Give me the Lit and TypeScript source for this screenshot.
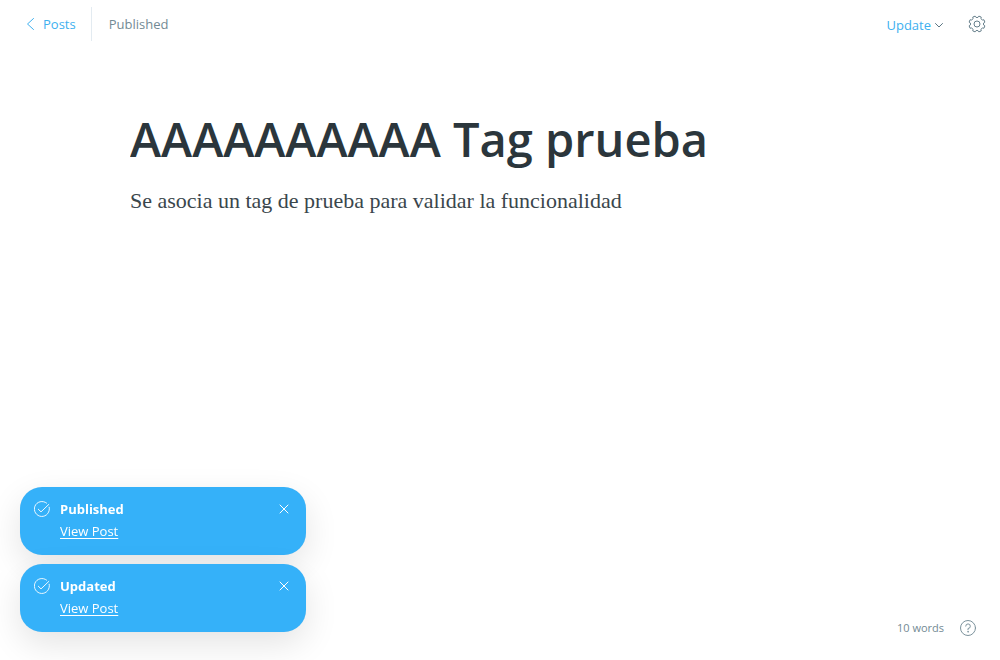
import { LitElement, html, css, svg } from "lit";
import { customElement, property, state } from "lit/decorators.js";

@customElement("toast-notice")
export class ToastNotice extends LitElement {
  @property() heading = "";

  static styles = css`
    :host { display: block; }
    .toast {
      display: flex;
      align-items: flex-start;
      gap: 10px;
      box-sizing: border-box;
      padding: 11px 16px 13px 14px;
      border-radius: 22px;
      background: #35b1f9;
      color: #fff;
      font-size: 13px;
      line-height: 22px;
      box-shadow: 0 0 1px rgba(0, 0, 0, 0.08), 0 12px 34px rgba(0, 0, 0, 0.11);
    }
    .body { flex: 1; }
    .heading { font-weight: 700; }
    .link { color: #fff; text-underline-offset: 2px; display: inline-block; }
    .check { display: block; margin-top: 3px; }
    .close {
      border: 0;
      padding: 0;
      margin-top: 5px;
      background: none;
      color: inherit;
      cursor: pointer;
      display: flex;
    }
  `;

  private dismiss() {
    this.dispatchEvent(new CustomEvent("dismiss", { bubbles: true, composed: true }));
  }

  render() {
    return html`
      <div class="toast" role="status">
        <svg class="check" width="16" height="16" viewBox="0 0 16 16" fill="none" stroke="#fff" stroke-opacity="0.9" stroke-width="1" stroke-linecap="round" stroke-linejoin="round" aria-hidden="true">
          <path d="M15.2 6.2A7.5 7.5 0 1 1 12.6 2.1" />
          <path d="M4.3 8.2L7 10.9L14.8 3.4" />
        </svg>
        <div class="body">
          <div class="heading">${this.heading}</div>
          <a class="link" href="#view">View Post</a>
        </div>
        <button class="close" aria-label="Close" @click=${this.dismiss}>
          <svg width="12" height="12" viewBox="0 0 12 12" fill="none" stroke="currentColor" stroke-width="1" stroke-linecap="round">
            <path d="M2 2L10 10M10 2L2 10" />
          </svg>
        </button>
      </div>
    `;
  }
}

@customElement("app-root")
export class AppRoot extends LitElement {
  @state() private toasts = ["Published", "Updated"];

  static styles = css`
    :host {
      display: flex;
      flex-direction: column;
      min-height: 100vh;
      background: #fff;
      color: #15171a;
      font-family: "Open Sans", "Noto Sans", sans-serif;
      font-size: 13px;
    }
    .bar {
      display: flex;
      align-items: center;
      justify-content: space-between;
      padding: 7px 14px 0 26px;
      line-height: 20px;
    }
    .side { display: flex; align-items: center; }
    .back {
      display: flex;
      align-items: center;
      gap: 7px;
      height: 34px;
      padding-right: 15px;
      border-right: 1px solid #e3ebf1;
      color: #3eb0ef;
      text-decoration: none;
    }
    .status { padding-left: 17px; color: #738a94; }
    button {
      border: 0;
      padding: 0;
      background: none;
      font: inherit;
      cursor: pointer;
      display: flex;
      align-items: center;
    }
    .update { gap: 3px; padding-top: 2px; color: #3eb0ef; }
    .update svg { color: #5b7683; }
    .gear { margin-left: 24px; color: #667f8b; }
    .editor {
      flex: 1;
      box-sizing: border-box;
      width: 100%;
      max-width: 740px;
      margin: 0 auto;
      padding-top: 68px;
    }
    .title {
      display: block;
      width: 100%;
      border: 0;
      padding: 0;
      margin: 0 0 16px;
      outline: none;
      background: none;
      color: #2b363c;
      font: 600 47px/60px "Open Sans", "Noto Sans", sans-serif;
    }
    .text {
      margin: 0;
      outline: none;
      color: #3a464c;
      font: 22px/32px Georgia, "Liberation Serif", serif;
    }
    .toasts {
      position: fixed;
      left: 20px;
      bottom: 28px;
      display: flex;
      flex-direction: column;
      gap: 9px;
      width: 286px;
    }
    .foot {
      display: flex;
      align-items: center;
      justify-content: flex-end;
      gap: 15px;
      padding: 0 23px 23px 0;
      color: #738a94;
      font-size: 11px;
      line-height: 18px;
    }
    .help { display: flex; color: #7d939d; }
  `;

  private gearPath() {
    const c = 9;
    const pt = (r: number, deg: number) => {
      const a = (deg * Math.PI) / 180;
      return `${(c + r * Math.cos(a)).toFixed(2)} ${(c + r * Math.sin(a)).toFixed(2)}`;
    };
    let d = "";
    for (let i = 0; i < 8; i++) {
      const a = i * 45 + 22.5;
      d += `${i ? "L" : "M"}${pt(8.1, a - 9)}L${pt(8.1, a + 9)}Q${pt(6.5, a + 11)} ${pt(6.4, a + 22.5)}Q${pt(6.5, a + 34)} ${pt(8.1, a + 36)}`;
    }
    return d + "Z";
  }

  private dismiss(name: string) {
    this.toasts = this.toasts.filter((t) => t !== name);
  }

  render() {
    return html`
      <header class="bar">
        <div class="side">
          <a class="back" href="#posts">
            <svg width="10" height="14" viewBox="0 0 10 14" fill="none" stroke="currentColor" stroke-width="1" stroke-linecap="round" stroke-linejoin="round" aria-hidden="true">
              <path d="M7.5 1.5L1.5 7L7.5 12.5" />
            </svg>
            Posts
          </a>
          <span class="status">Published</span>
        </div>
        <div class="side">
          <button class="update">
            Update
            <svg width="10" height="8" viewBox="0 0 10 8" fill="none" stroke="currentColor" stroke-width="1" stroke-linecap="round" stroke-linejoin="round" aria-hidden="true">
              <path d="M1.5 2.5L5 6L8.5 2.5" />
            </svg>
          </button>
          <button class="gear" aria-label="Settings">
            <svg width="18" height="18" viewBox="0 0 18 18" fill="none" stroke="currentColor" stroke-width="1" stroke-linejoin="round">
              ${svg`<path d=${this.gearPath()} />`}
              <circle cx="9" cy="9" r="3" />
            </svg>
          </button>
        </div>
      </header>
      <main class="editor">
        <input class="title" aria-label="Post title" spellcheck="false" .value=${"AAAAAAAAAA Tag prueba"} />
        <p class="text" contenteditable="true" spellcheck="false">Se asocia un tag de prueba para validar la funcionalidad</p>
      </main>
      <footer class="foot">
        <span>10 words</span>
        <a class="help" href="#help" aria-label="Help">
          <svg width="18" height="18" viewBox="0 0 18 18" fill="none" stroke="currentColor" stroke-width="1" stroke-linecap="round">
            <circle cx="9" cy="9" r="7.5" />
            <path d="M6.7 7.1A2.3 2.3 0 1 1 9 9.5V10.8" />
            <circle cx="9" cy="12.8" r="0.3" />
          </svg>
        </a>
      </footer>
      <aside class="toasts">
        ${this.toasts.map(
          (t) => html`<toast-notice .heading=${t} @dismiss=${() => this.dismiss(t)}></toast-notice>`
        )}
      </aside>
    `;
  }
}
